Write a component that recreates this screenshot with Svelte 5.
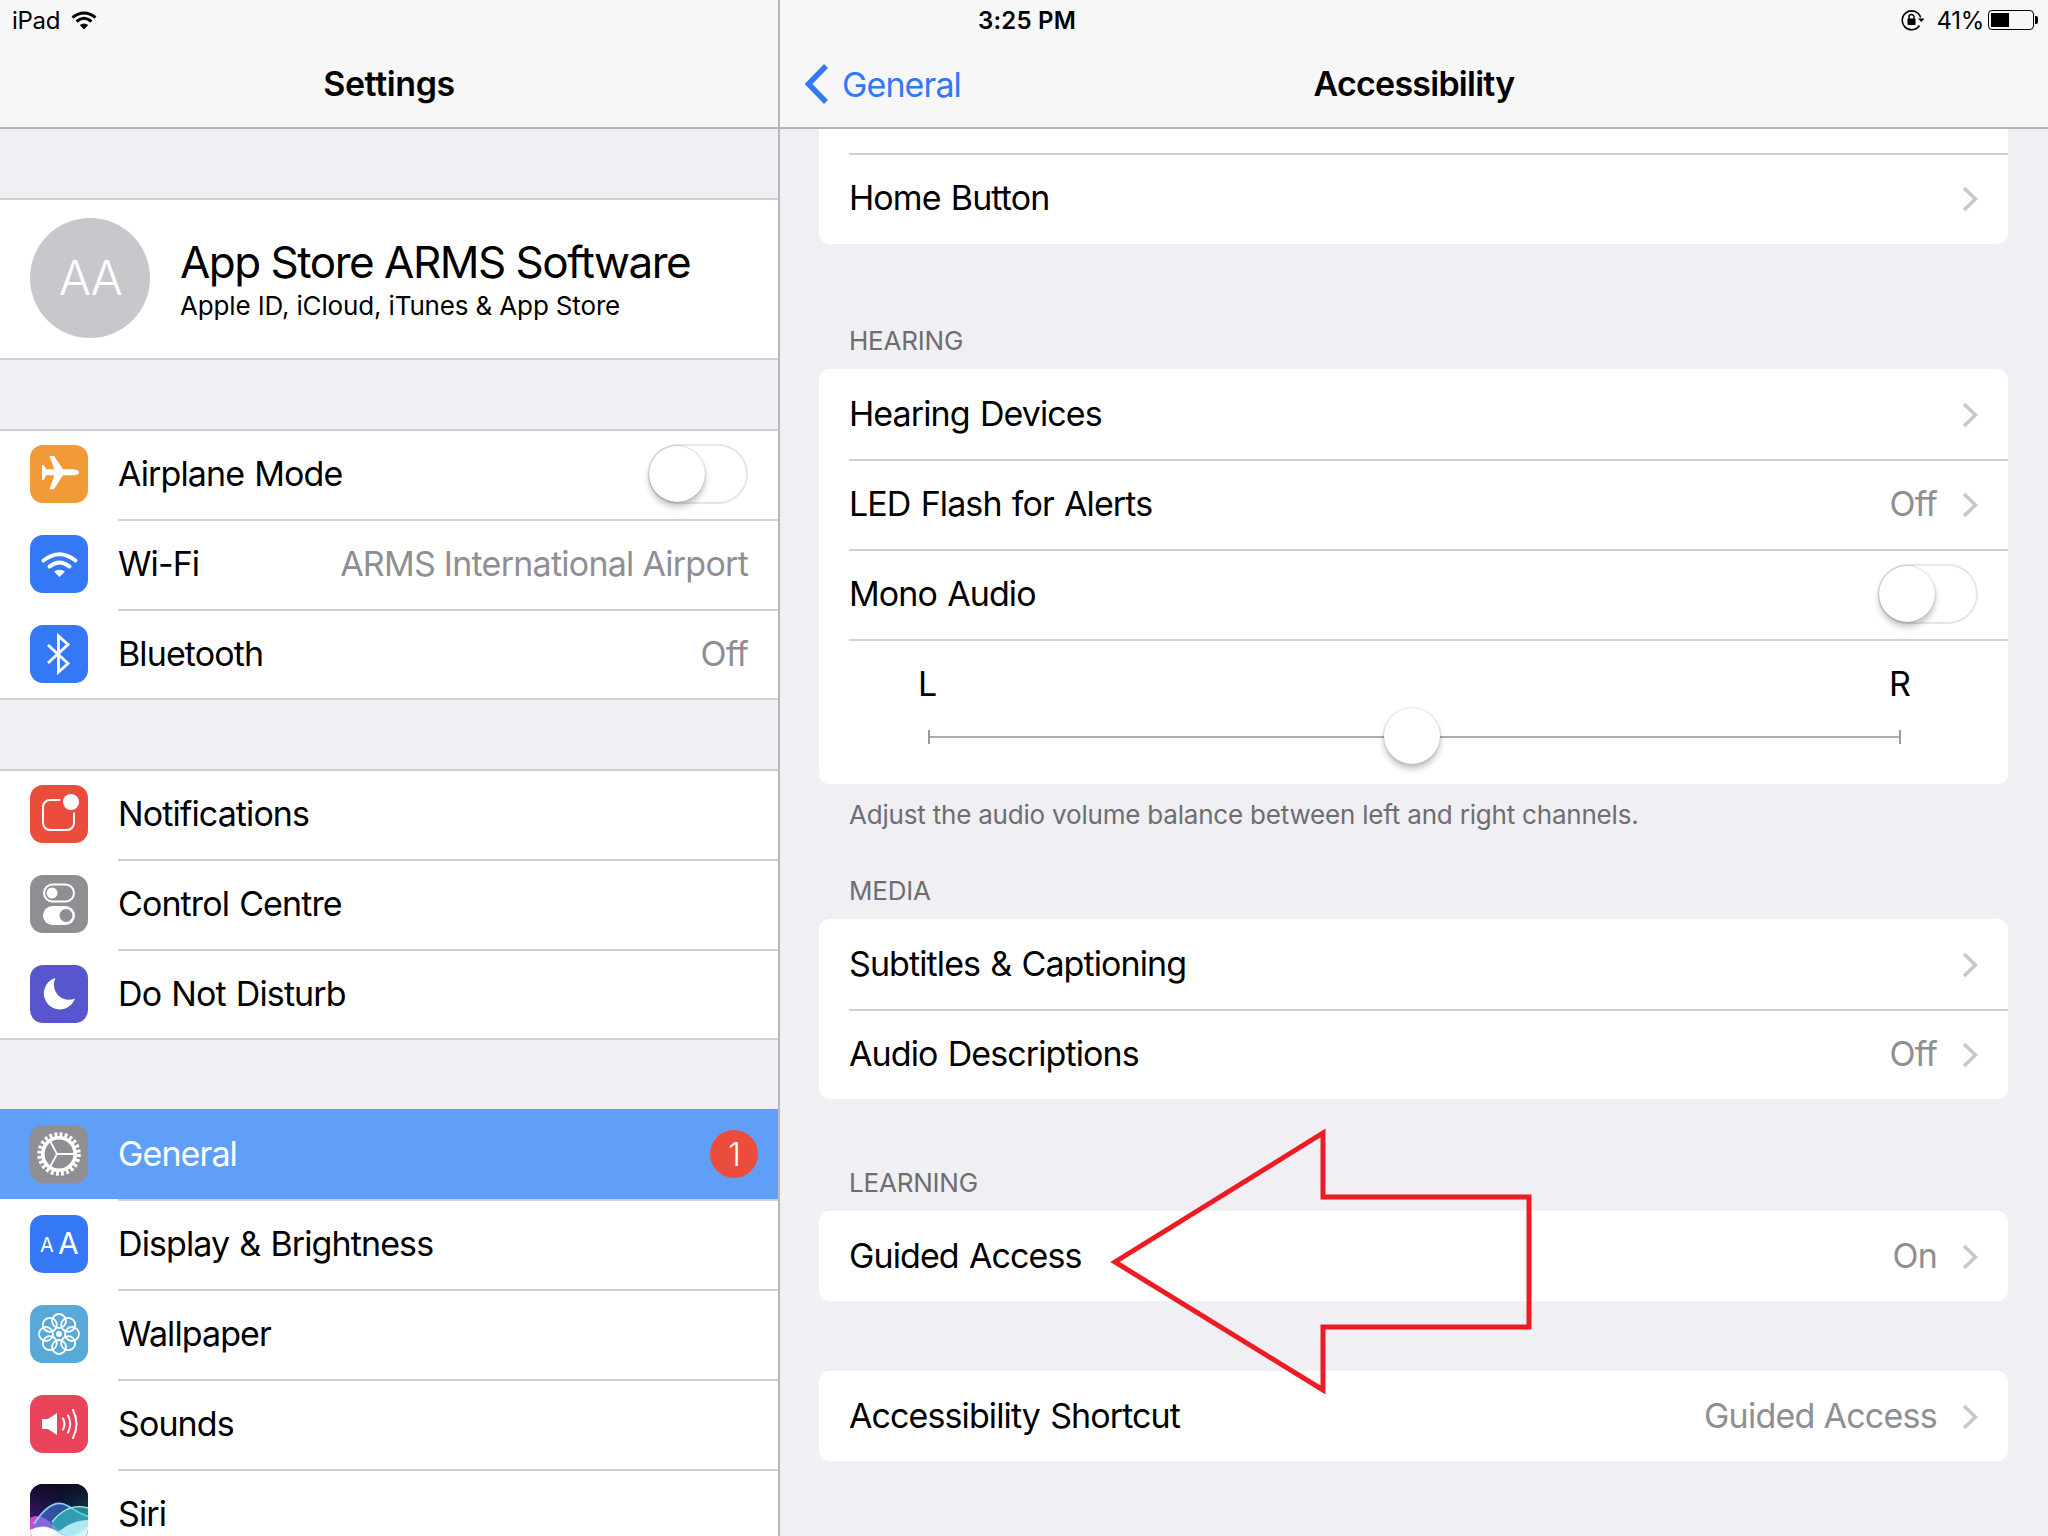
<script>
  const groupsLeft = [
    { cls: 'g1', rows: [
      { icon: 'plane', label: 'Airplane Mode', toggle: true },
      { icon: 'wifi', label: 'Wi-Fi', value: 'ARMS International Airport' },
      { icon: 'bt', label: 'Bluetooth', value: 'Off' }
    ]},
    { cls: 'g2', rows: [
      { icon: 'notif', label: 'Notifications' },
      { icon: 'control', label: 'Control Centre' },
      { icon: 'moon', label: 'Do Not Disturb' }
    ]},
    { cls: 'g3', rows: [
      { icon: 'gear', label: 'General', selected: true, badge: '1' },
      { icon: 'aa', label: 'Display & Brightness' },
      { icon: 'flower', label: 'Wallpaper' },
      { icon: 'sound', label: 'Sounds' },
      { icon: 'siri', label: 'Siri', open: true }
    ]}
  ];
  const petals = [0, 45, 90, 135, 180, 225, 270, 315];
</script>

{#snippet glyph(name)}
  <svg class="glyph" viewBox="0 0 58 58" aria-hidden="true">
    {#if name === 'plane'}
      <path fill="#fff" d="M49 27.4c0-1.8-3-3.1-6-3.1H33L24 11h-4.6l5 13.3H16.2L13.6 20H12v15h1.6l2.6-4.7h8.2l-5 14H24l9-14H43c3 0 6-1.1 6-2.9z" />
    {:else if name === 'wifi'}
      <g fill="none" stroke="#fff" stroke-width="4" stroke-linecap="round">
        <path d="M13.5 25.5Q29.5 13 45.5 25.5" />
        <path d="M19.5 31.5Q29.5 23.5 39.5 31.5" />
      </g>
      <path fill="#fff" d="M29.5 42L24 36.6Q29.5 32.8 35 36.6Z" />
    {:else if name === 'bt'}
      <path fill="none" stroke="#fff" stroke-width="2.8" d="M18 20L38 38.5L28.5 47V11L38 19.5L18 38" />
    {:else if name === 'notif'}
      <rect x="13" y="15" width="31" height="30" rx="7" fill="none" stroke="#fff" stroke-width="2" />
      <circle cx="41" cy="17" r="11" fill="#eb4d3d" />
      <circle cx="41" cy="17" r="8" fill="#fff" />
    {:else if name === 'control'}
      <rect x="14" y="9.5" width="30" height="17" rx="8.5" fill="none" stroke="#fff" stroke-width="2" />
      <circle cx="22" cy="18" r="5.5" fill="#fff" />
      <rect x="13" y="31" width="32" height="19" rx="9.5" fill="#fff" />
      <circle cx="36" cy="40.5" r="6.5" fill="#8e8e93" />
    {:else if name === 'moon'}
      <path fill="#fff" d="M25.5 13A16 16 0 1 0 45 33.5A15 15 0 0 1 25.5 13Z" />
    {:else if name === 'gear'}
      <g fill="none" stroke="#fff">
        <circle cx="29" cy="29" r="19.3" stroke-width="5" stroke-dasharray="2.9 2.15" />
        <circle cx="29" cy="29" r="16.2" stroke-width="3.6" />
        <path stroke-width="1.8" d="M27 29H45M27 29L19.5 15M27 29L19.5 43" />
      </g>
    {:else if name === 'aa'}
      <text x="10" y="37" class="aa-s">A</text>
      <text x="28" y="39" class="aa-l">A</text>
    {:else if name === 'flower'}
      <g fill="none" stroke="#fff" stroke-width="1.8">
        {#each petals as a}
          <circle cx="29" cy="16" r="7" transform="rotate({a} 29 29)" />
        {/each}
      </g>
      <circle cx="29" cy="29" r="3" fill="#fff" />
    {:else if name === 'sound'}
      <path fill="#fff" d="M12 24H18L27 18V40L18 34H12Z" />
      <g fill="none" stroke="#fff" stroke-width="2" stroke-linecap="round">
        <path d="M33 23.5Q36 29 33 34.5" />
        <path d="M38 20.5Q42.5 29 38 37.5" />
        <path d="M43 15Q50 29 43 43" />
      </g>
    {:else if name === 'siri'}
      <defs>
        <linearGradient id="sirisky" x1="0" y1="0" x2="1" y2="0">
          <stop offset="0" stop-color="#35155e" />
          <stop offset="0.55" stop-color="#141a3f" />
          <stop offset="1" stop-color="#123c4e" />
        </linearGradient>
        <linearGradient id="sirifade" x1="0" y1="0" x2="0" y2="1">
          <stop offset="0" stop-color="#0b0a1e" stop-opacity="0.9" />
          <stop offset="0.5" stop-color="#0b0a1e" stop-opacity="0" />
        </linearGradient>
      </defs>
      <rect width="58" height="58" fill="url(#sirisky)" />
      <rect width="58" height="58" fill="url(#sirifade)" />
      <path d="M0 34Q10 28 22 40T44 50H0Z" fill="#e24fd6" opacity="0.9" />
      <path d="M4 40Q22 12 38 22T58 32V52H4Z" fill="#4a7fe8" opacity="0.55" />
      <path d="M4 40Q22 12 38 22T58 32" fill="none" stroke="#7fd0ff" stroke-width="1.8" />
      <path d="M22 38Q38 18 58 24V52H22Z" fill="#35d5c6" opacity="0.55" />
      <path d="M22 38Q38 18 58 24" fill="none" stroke="#9cf2e0" stroke-width="1.4" />
      <path d="M0 46Q14 38 28 48T58 42V58H0Z" fill="#dff4ff" />
      <path d="M0 50Q14 58 28 48Q14 40 0 46Z" fill="#fff" />
      <path d="M28 48Q44 58 58 44V36Q42 36 28 48Z" fill="#c6f5fa" opacity="0.85" />
    {/if}
  </svg>
{/snippet}

{#snippet chevron()}
  <svg class="chev" viewBox="0 0 16 26" aria-hidden="true"><path d="M2 2L13.5 13L2 24" /></svg>
{/snippet}

{#snippet toggle()}
  <span class="toggle"><span class="knob"></span></span>
{/snippet}

{#snippet row(label, value, chev = true)}
  <div class="crow">
    <span class="lab">{label}</span>
    {#if value}<span class="val">{value}</span>{/if}
    {#if chev}{@render chevron()}{/if}
  </div>
{/snippet}

<div class="screen">
  <aside class="left">
    <header class="nav">
      <div class="status">
        <span class="carrier">iPad</span>
        <svg class="swifi" viewBox="0 0 26 20" aria-hidden="true">
          <g fill="none" stroke="#000" stroke-width="3">
            <path d="M1.5 7.5Q13 -1.5 24.5 7.5" />
            <path d="M5.5 11.5Q13 5 20.5 11.5" />
          </g>
          <path d="M13 19.5L8.8 15Q13 12 17.2 15Z" />
        </svg>
      </div>
      <h1 class="title">Settings</h1>
    </header>

    <a class="profile" href="#profile">
      <span class="avatar">AA</span>
      <span class="who">
        <span class="name">App Store ARMS Software</span>
        <span class="sub">Apple ID, iCloud, iTunes &amp; App Store</span>
      </span>
    </a>

    {#each groupsLeft as g}
      <section class="group {g.cls}">
        {#each g.rows as r}
          <div class="srow" class:selected={r.selected} class:open={r.open}>
            <span class="ico {r.icon}">{@render glyph(r.icon)}</span>
            <div class="sbody">
              <span class="lab">{r.label}</span>
              {#if r.value}<span class="val">{r.value}</span>{/if}
              {#if r.toggle}{@render toggle()}{/if}
              {#if r.badge}<span class="badge">{r.badge}</span>{/if}
            </div>
          </div>
        {/each}
      </section>
    {/each}
  </aside>

  <main class="right">
    <header class="nav navr">
      <div class="statusr">
        <span class="time">3:25 PM</span>
        <span class="sysicons">
          <svg class="rot" viewBox="0 0 24 22" aria-hidden="true">
            <path d="M18.5 16.5A9.4 9.4 0 1 1 19.6 8.5" fill="none" stroke="#000" stroke-width="1.6" />
            <path d="M17 9.5H23.5L20.3 13Z" />
            <rect x="6.5" y="9.5" width="8" height="6.5" rx="1" />
            <path d="M8 10V8a2.5 2.5 0 0 1 5 0v2" fill="none" stroke="#000" stroke-width="1.5" />
          </svg>
          <span class="pct">41%</span>
          <span class="batt"><span class="fill"></span></span>
          <span class="nub"></span>
        </span>
      </div>
      <div class="navline">
        <a class="back" href="#general">
          <svg viewBox="0 0 26 42" aria-hidden="true"><path d="M22 3L4.5 21L22 39" /></svg>
          <span>General</span>
        </a>
        <h1 class="title">Accessibility</h1>
      </div>
    </header>

    <section class="card top-card">
      <div class="stub"></div>
      {@render row('Home Button')}
    </section>

    <h2 class="head h-hearing">Hearing</h2>
    <section class="card">
      {@render row('Hearing Devices')}
      {@render row('LED Flash for Alerts', 'Off')}
      <div class="crow">
        <span class="lab">Mono Audio</span>
        {@render toggle()}
      </div>
      <div class="balance">
        <div class="lr"><span>L</span><span>R</span></div>
        <div class="track">
          <span class="thumb"></span>
        </div>
      </div>
    </section>
    <p class="foot">Adjust the audio volume balance between left and right channels.</p>

    <h2 class="head h-media">Media</h2>
    <section class="card">
      {@render row('Subtitles & Captioning')}
      {@render row('Audio Descriptions', 'Off')}
    </section>

    <h2 class="head h-learning">Learning</h2>
    <section class="card">
      {@render row('Guided Access', 'On')}
    </section>

    <section class="card last">
      {@render row('Accessibility Shortcut', 'Guided Access')}
    </section>
  </main>

  <svg class="arrow" viewBox="0 0 2048 1536" aria-hidden="true">
    <path d="M1323 1133V1197H1529V1327H1323V1390L1115 1262Z" />
  </svg>
</div>

<style>
  :global(body) { margin: 0; background: #efeff4; }
  * { box-sizing: border-box; }
  .screen {
    position: relative;
    display: flex;
    width: 2048px;
    height: 1536px;
    overflow: hidden;
    background: #efeff4;
    color: #000;
    font-family: Inter, "Liberation Sans", sans-serif;
    font-size: 34px;
    letter-spacing: -0.9px;
  }
  .lab { word-spacing: 1.5px; margin-bottom: 2px; }
  .val { letter-spacing: -0.75px; margin-bottom: 2px; }
  .left {
    flex: none;
    width: 780px;
    border-right: 2px solid #b8b8bc;
  }
  .right { flex: 1; min-width: 0; }
  .nav {
    height: 129px;
    background: #f7f7f8;
    border-bottom: 2px solid #b4b4b8;
    position: relative;
  }
  .title {
    margin: 0;
    font-size: 34px;
    font-weight: 600;
    letter-spacing: -0.4px;
    text-align: center;
    line-height: 42px;
  }
  .right .title { letter-spacing: -0.75px; }
  .status {
    height: 40px;
    display: flex;
    align-items: center;
    gap: 11px;
    padding-left: 12px;
    font-size: 24px;
    letter-spacing: -0.3px;
  }
  .swifi { width: 26px; height: 20px; }
  .left .title { padding-top: 23px; }

  .profile {
    display: flex;
    align-items: center;
    height: 162px;
    margin-top: 69px;
    padding-left: 30px;
    gap: 30px;
    background: #fff;
    border-top: 2px solid #d0d0d4;
    border-bottom: 2px solid #d0d0d4;
    color: inherit;
    text-decoration: none;
  }
  .avatar {
    width: 120px;
    height: 120px;
    margin-top: -2px;
    border-radius: 50%;
    background: #c7c7cc;
    color: #fff;
    display: flex;
    align-items: center;
    justify-content: center;
    font-size: 48px;
    font-weight: 300;
    letter-spacing: -1.5px;
    padding-bottom: 2px;
  }
  .who { display: flex; flex-direction: column; }
  .name { font-size: 44px; line-height: 52px; letter-spacing: -1.5px; }
  .sub { font-size: 26px; line-height: 34px; letter-spacing: -0.15px; margin-top: 1px; }

  .group {
    background: #fff;
    margin-top: 69px;
  }
  .srow {
    display: flex;
    align-items: center;
    height: 90px;
    padding-left: 30px;
    gap: 30px;
    position: relative;
  }
  .srow:first-child { box-shadow: inset 0 2px 0 #d0d0d4; }
  .srow:last-child { height: 91px; box-shadow: inset 0 -2px 0 #d0d0d4; }
  .g3 .srow:last-child { box-shadow: none; }
  .srow.selected { background: #5f9ff8; color: #fff; box-shadow: none; }
  .sbody {
    flex: 1;
    align-self: stretch;
    min-width: 0;
    display: flex;
    align-items: center;
    justify-content: space-between;
    padding-right: 30px;
    border-top: 2px solid #d0d0d4;
    padding-bottom: 2px;
  }
  .srow:last-child .sbody { padding-bottom: 3px; }
  .srow:first-child .sbody { border-top-color: transparent; }
  .srow.selected + .srow .sbody { border-top-color: #d0d0d4; }
  .selected .sbody { padding-right: 20px; }
  .ico {
    flex: none;
    width: 58px;
    height: 58px;
    border-radius: 13px;
    overflow: hidden;
    display: block;
    margin-top: -1px;
  }
  .glyph { display: block; width: 58px; height: 58px; }
  .plane { background: #f19a38; }
  .wifi, .bt, .aa { background: #3478f6; }
  .notif { background: #eb4d3d; }
  .control, .gear { background: #8e8e93; }
  .moon { background: #5856cf; }
  .flower { background: #59a9d8; }
  .sound { background: #ea445a; }
  .siri { background: #1a1338; }
  .aa-s { font-size: 20px; fill: #fff; letter-spacing: 0; }
  .aa-l { font-size: 30px; fill: #fff; letter-spacing: 0; }
  .open { align-items: flex-start; }
  .open .ico { margin-top: 15px; }

  .val { color: #8e8e93; white-space: nowrap; }
  .badge {
    width: 48px;
    height: 48px;
    border-radius: 50%;
    background: #eb4d3d;
    color: #fff;
    display: flex;
    align-items: center;
    justify-content: center;
    font-size: 32px;
    font-weight: 300;
  }
  .toggle {
    flex: none;
    position: relative;
    display: block;
    width: 100px;
    height: 60px;
    border-radius: 30px;
    background: #fff;
    border: 2px solid #e5e5ea;
  }
  .knob {
    position: absolute;
    left: -1px;
    top: 0;
    width: 56px;
    height: 56px;
    border-radius: 50%;
    background: #fff;
    box-shadow: 0 5px 6px rgba(0,0,0,.24), 0 0 2px rgba(0,0,0,.28);
  }

  .statusr {
    height: 40px;
    display: flex;
    align-items: center;
    justify-content: flex-end;
    padding-right: 10px;
    position: relative;
    font-size: 24px;
    letter-spacing: -0.3px;
  }
  .time {
    position: absolute;
    left: 198px;
    font-weight: 600;
    letter-spacing: 0.2px;
  }
  .sysicons { display: flex; align-items: center; }
  .rot { width: 24px; height: 22px; margin-right: 12px; }
  .pct { margin-right: 4px; }
  .batt {
    display: block;
    width: 46px;
    height: 20px;
    border: 1.5px solid #000;
    border-radius: 4px;
    padding: 2px;
  }
  .fill { display: block; width: 18px; height: 100%; background: #000; }
  .nub { display: block; width: 3px; height: 8px; background: #000; border-radius: 0 2px 2px 0; margin-left: 1px; }
  .navline {
    position: relative;
    display: flex;
    justify-content: center;
    padding-top: 23px;
  }
  .back {
    position: absolute;
    left: 24px;
    top: 19px;
    display: flex;
    align-items: center;
    gap: 12px;
    color: #3478f6;
    text-decoration: none;
    height: 50px;
  }
  .back svg { width: 26px; height: 42px; }
  .back path { fill: none; stroke: #3478f6; stroke-width: 5.5; }

  .card {
    margin: 0 40px 0 39px;
    background: #fff;
    border-radius: 10px;
    overflow: hidden;
  }
  .top-card { border-radius: 0 0 10px 10px; padding-bottom: 1px; }
  .stub { height: 24px; }
  .crow {
    display: flex;
    align-items: center;
    height: 90px;
    margin-left: 30px;
    padding-right: 30px;
    border-top: 2px solid #d0d0d4;
    padding-bottom: 2px;
  }
  .card > .crow:first-child { border-top-color: transparent; }
  .crow .lab { flex: 1; }
  .crow .val { margin-right: 25px; }
  .chev { display: block; width: 16px; height: 26px; flex: none; margin-top: 1px; }
  .chev path { fill: none; stroke: #c7c7cc; stroke-width: 3.6; }

  .head {
    margin: 0;
    display: flex;
    align-items: flex-end;
    padding: 0 0 13px 69px;
    font-size: 26px;
    font-weight: 400;
    line-height: 30px;
    letter-spacing: -0.2px;
    color: #6d6d72;
    text-transform: uppercase;
  }
  .h-hearing { height: 125px; }
  .h-media { height: 89px; }
  .h-learning { height: 112px; }
  .foot {
    margin: 0;
    height: 46px;
    padding: 16px 0 0 69px;
    font-size: 26px;
    line-height: 30px;
    letter-spacing: -0.2px;
    color: #6d6d72;
  }
  .last { margin-top: 70px; }

  .balance {
    height: 145px;
    margin-left: 30px;
    border-top: 2px solid #d0d0d4;
    padding: 23px 107px 0 79px;
  }
  .lr { display: flex; justify-content: space-between; line-height: 40px; margin: 0 -9px 0 -10px; }
  .track {
    position: relative;
    height: 2px;
    margin-top: 32px;
    background: #aeaeb0;
  }
  .track::before, .track::after {
    content: "";
    position: absolute;
    top: -6px;
    width: 2px;
    height: 14px;
    background: #9a9a9c;
  }
  .track::before { left: 0; }
  .track::after { right: 0; }
  .thumb {
    position: absolute;
    left: 456px;
    top: -28px;
    width: 56px;
    height: 56px;
    border-radius: 50%;
    background: #fff;
    box-shadow: 0 5px 6px rgba(0,0,0,.24), 0 0 2px rgba(0,0,0,.28);
  }

  .arrow {
    position: absolute;
    inset: 0;
    width: 2048px;
    height: 1536px;
    pointer-events: none;
  }
  .arrow path { fill: none; stroke: #ed1c24; stroke-width: 5; stroke-miterlimit: 10; }
</style>
